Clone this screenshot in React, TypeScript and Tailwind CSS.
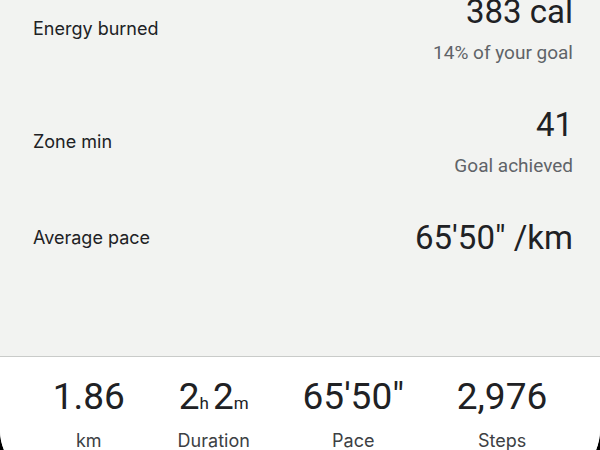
import React from 'react';

const roboto = { fontFamily: 'Roboto, "Open Sans", sans-serif' };
const labelFont = { fontFamily: 'Inter, Roboto, sans-serif' };

interface MetricRowProps {
  label: string;
  value: React.ReactNode;
  note?: string;
}

function MetricRow({ label, value, note }: MetricRowProps) {
  return (
    <div className="flex items-center justify-between">
      <div className="text-[18px] leading-6 text-[#202124]" style={labelFont}>
        {label}
      </div>
      <div className="flex flex-col items-end gap-[9px]">
        <div className="text-[33px] leading-10 text-[#202124]">{value}</div>
        {note && <div className="text-[19px] leading-6 text-[#5f6368]">{note}</div>}
      </div>
    </div>
  );
}

interface StatProps {
  value: React.ReactNode;
  label: string;
}

function Stat({ value, label }: StatProps) {
  return (
    <div className="flex flex-col items-center gap-[10px]">
      <div className="h-[44px] text-[37px] leading-[44px] text-[#202124]">{value}</div>
      <div className="text-[18px] leading-6 text-[#3c4043]" style={labelFont}>
        {label}
      </div>
    </div>
  );
}

export default function App() {
  return (
    <div className="h-[450px] w-[600px] overflow-hidden bg-black" style={roboto}>
      <div className="flex h-[482px] flex-col overflow-hidden rounded-b-[52px] bg-white">
        <div className="h-[356px] bg-[#f2f3f1] pl-[33px] pr-[27px]">
          <div className="-mt-2 flex flex-col gap-10">
            <MetricRow label="Energy burned" value="383 cal" note="14% of your goal" />
            <MetricRow label="Zone min" value="41" note="Goal achieved" />
            <MetricRow label="Average pace" value={<>65'50" /km</>} />
          </div>
        </div>
        <div className="border-t border-[#c9cbc9] bg-white pt-[18px]">
          <div className="flex justify-evenly">
            <Stat value="1.86" label="km" />
            <Stat
              value={
                <>
                  2<span className="text-[17px] leading-none">h</span>
                  <span className="ml-[4px]">2</span>
                  <span className="text-[17px] leading-none">m</span>
                </>
              }
              label="Duration"
            />
            <Stat value={<>65'50"</>} label="Pace" />
            <Stat value="2,976" label="Steps" />
          </div>
        </div>
      </div>
    </div>
  );
}
